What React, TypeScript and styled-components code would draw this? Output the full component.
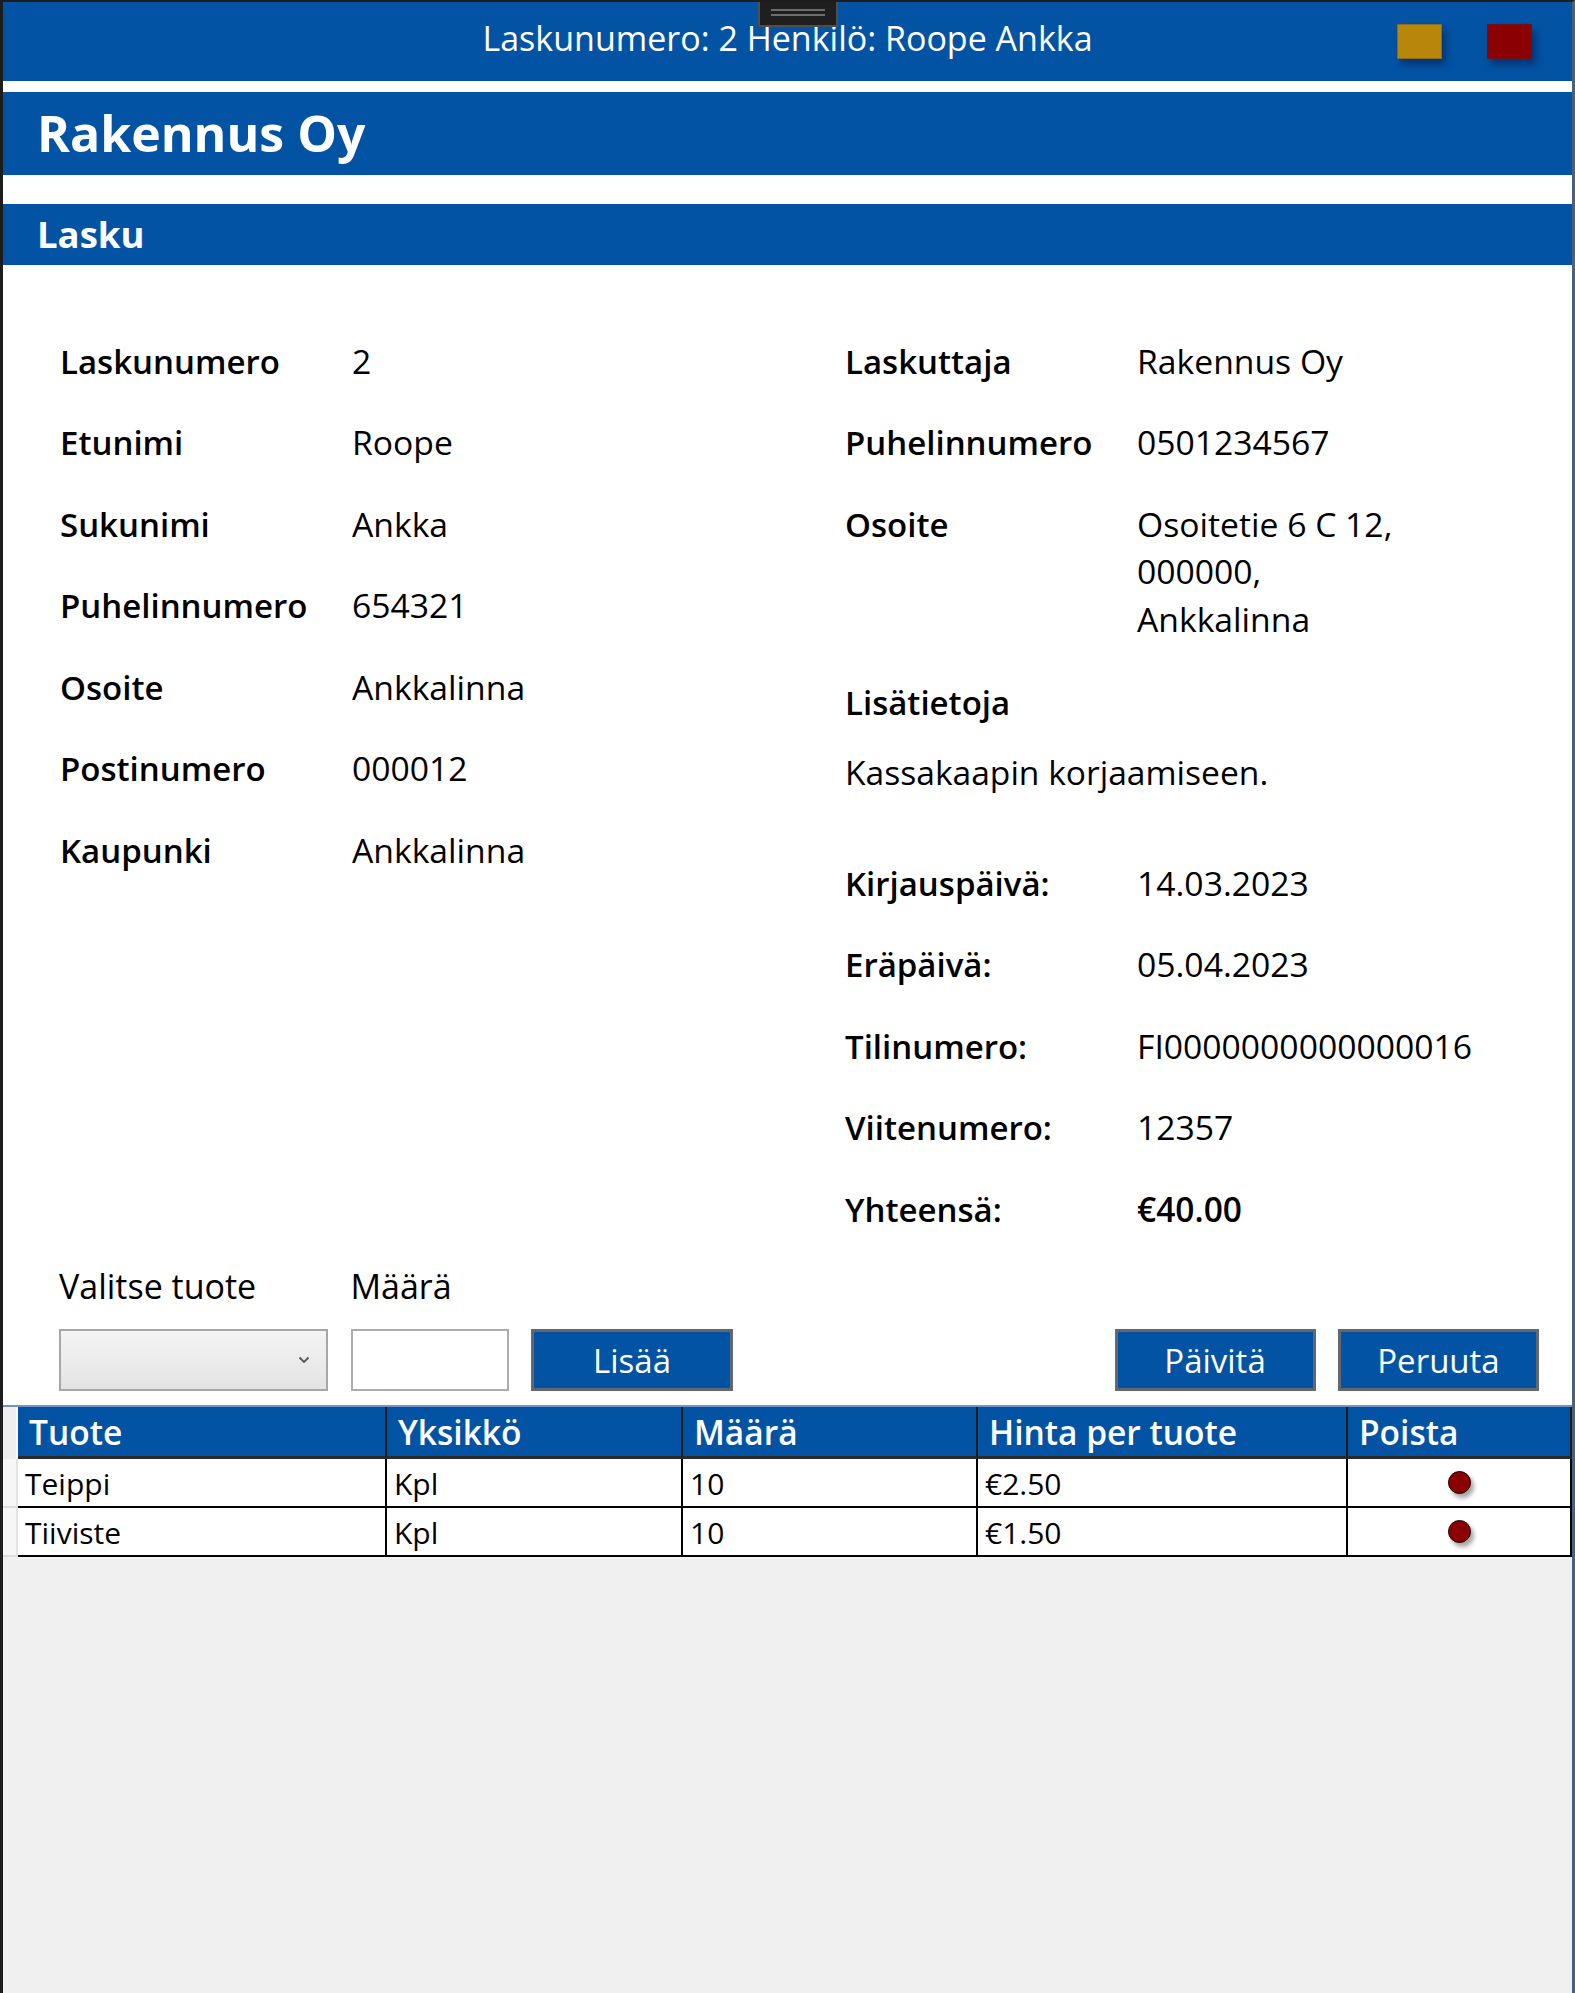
import React from "react";
import styled, { createGlobalStyle } from "styled-components";

const BLUE = "#0353a4";
const FONT = `"Open Sans", "Noto Sans", "Liberation Sans", sans-serif`;

const GlobalStyle = createGlobalStyle`
  html, body { margin: 0; padding: 0; background: #ffffff; }
  body { font-family: ${FONT}; color: #000000; }
  *, *::before, *::after { box-sizing: border-box; }
`;

const Window = styled.div`
  width: 1575px;
  height: 1993px;
  display: flex;
  flex-direction: column;
  border-top: 2px solid #1d1d1d;
  border-left: 3px solid #1d1d1d;
  border-right: 3px solid #46627f;
  background: #ffffff;
  overflow: hidden;
`;

const TitleBar = styled.header`
  position: relative;
  flex: none;
  height: 79px;
  background: ${BLUE};
  display: grid;
  grid-template-columns: 1fr auto 1fr;
  align-items: center;
`;

const TitleText = styled.div`
  grid-column: 2;
  align-self: start;
  padding-top: 16px;
  font-size: 34px;
  line-height: 1.2;
  color: #ffffff;
  white-space: nowrap;
`;

const WindowButtons = styled.div`
  grid-column: 3;
  justify-self: end;
  display: flex;
  gap: 45px;
  padding-right: 40px;
`;

const WindowButton = styled.button<{ $color: string; $edge: string }>`
  width: 45px;
  height: 35px;
  padding: 0;
  border: 1px solid ${(p) => p.$edge};
  background: ${(p) => p.$color};
  box-shadow: 4px 6px 7px rgba(0, 20, 60, 0.45);
`;

const Handle = styled.div`
  position: absolute;
  top: -2px;
  left: 755px;
  width: 80px;
  height: 27px;
  background: #1f1f1f;
  border: 2px solid #4f4f4f;
  border-top: none;
  display: flex;
  flex-direction: column;
  align-items: center;
  gap: 3px;
  padding-top: 9px;
`;

const HandleLine = styled.span`
  width: 54px;
  height: 2px;
  background: #6c6c6c;
`;

const CompanyBand = styled.div`
  flex: none;
  margin-top: 11px;
  height: 83px;
  background: ${BLUE};
  color: #ffffff;
  font-size: 50px;
  font-weight: 700;
  line-height: 83px;
  padding-left: 34px;
  white-space: nowrap;
`;

const SectionBand = styled.div`
  flex: none;
  margin-top: 29px;
  height: 61px;
  background: ${BLUE};
  color: #ffffff;
  font-size: 36.5px;
  font-weight: 700;
  line-height: 61px;
  padding-left: 34px;
`;

const Content = styled.main`
  flex: none;
  padding: 72.5px 33px 14px 57px;
`;

const InfoColumns = styled.div`
  display: grid;
  grid-template-columns: 785px 1fr;
  align-items: start;
`;

const InfoColumn = styled.div`
  display: flex;
  flex-direction: column;
`;

const InfoGrid = styled.div<{ $top?: number }>`
  display: grid;
  grid-template-columns: 292px 1fr;
  row-gap: 34px;
  margin-top: ${(p) => p.$top ?? 0}px;
  line-height: 47.5px;
`;

const Label = styled.div`
  font-size: 33px;
  font-weight: 600;
  white-space: nowrap;
`;

const Value = styled.div<{ $strong?: boolean }>`
  font-size: ${(p) => (p.$strong ? 33.5 : 33.7)}px;
  font-weight: ${(p) => (p.$strong ? 600 : 400)};
  white-space: nowrap;
`;

const NoteLabel = styled.div`
  margin-top: 35.5px;
  font-size: 33px;
  line-height: 47.5px;
  font-weight: 600;
`;

const NoteText = styled.div`
  margin-top: 22.5px;
  font-size: 33.6px;
  line-height: 47.5px;
`;

const Controls = styled.div`
  display: grid;
  grid-template-columns: 269px 158px 202px 1fr 201px 201px;
  column-gap: 22.5px;
  row-gap: 18.5px;
  margin-top: 29.5px;
  margin-left: -1px;
`;

const ControlLabel = styled.div<{ $col: number }>`
  grid-column: ${(p) => p.$col};
  grid-row: 1;
  font-size: 34px;
  line-height: 47.5px;
  white-space: nowrap;
`;

const ComboBox = styled.div`
  grid-row: 2;
  grid-column: 1;
  height: 62px;
  border: 2px solid #a7a7a7;
  background: linear-gradient(#f4f4f4, #e3e3e3);
  display: flex;
  align-items: center;
  justify-content: flex-end;
  padding-right: 16px;
`;

const TextBox = styled.div`
  grid-row: 2;
  grid-column: 2;
  height: 62px;
  border: 2px solid #acacac;
  background: #ffffff;
`;

const ActionButton = styled.button<{ $col: number }>`
  grid-row: 2;
  grid-column: ${(p) => p.$col};
  height: 62px;
  margin: 0;
  padding: 3px 0 0;
  border: 3px solid #626871;
  background: ${BLUE};
  color: #ffffff;
  font-family: ${FONT};
  font-size: 33px;
  line-height: 1.2;
`;

const Panel = styled.section`
  flex: 1;
  background: #f0f0f0;
  border-top: 2px solid #7394be;
  display: flex;
  align-items: flex-start;
`;

const RowHeaders = styled.div`
  width: 15px;
  flex: none;
  display: flex;
  flex-direction: column;
`;

const RowHeaderCell = styled.div<{ $head?: boolean }>`
  height: ${(p) => (p.$head ? 52 : 49)}px;
  background: ${(p) => (p.$head ? "#efefef" : "#f6f6f6")};
  border-right: 2px solid ${(p) => (p.$head ? "#f9f9f9" : "#e2e2e2")};
  border-bottom: ${(p) => (p.$head ? "none" : "2px solid #dcdcdc")};
`;

const Table = styled.div`
  width: 1554px;
  display: grid;
  grid-template-columns: 369px 296px 295px 370px 224px;
`;

const HeadCell = styled.div`
  height: 52px;
  background: ${BLUE};
  color: #ffffff;
  font-size: 33.5px;
  font-weight: 600;
  line-height: 49px;
  padding: 1px 0 0 11px;
  border-right: 2px solid #1b1b1b;
  border-bottom: 3px solid #2a2a2a;
  white-space: nowrap;
`;

const Cell = styled.div<{ $center?: boolean }>`
  height: 49px;
  background: #ffffff;
  font-size: 30px;
  line-height: 47px;
  padding: ${(p) => (p.$center ? "0" : "1px 0 0 7px")};
  border-right: 2px solid #000000;
  border-bottom: 2px solid #000000;
  display: ${(p) => (p.$center ? "flex" : "block")};
  align-items: center;
  justify-content: center;
  white-space: nowrap;
`;

const DeleteDot = styled.span`
  width: 23px;
  height: 23px;
  border-radius: 50%;
  background: #8b0000;
  border: 1.5px solid #1a0000;
  box-shadow: 3px 4px 4px rgba(0, 0, 0, 0.35);
`;

const leftInfo: [string, string][] = [
  ["Laskunumero", "2"],
  ["Etunimi", "Roope"],
  ["Sukunimi", "Ankka"],
  ["Puhelinnumero", "654321"],
  ["Osoite", "Ankkalinna"],
  ["Postinumero", "000012"],
  ["Kaupunki", "Ankkalinna"],
];

const dates: [string, string, boolean][] = [
  ["Kirjauspäivä:", "14.03.2023", false],
  ["Eräpäivä:", "05.04.2023", false],
  ["Tilinumero:", "FI0000000000000016", false],
  ["Viitenumero:", "12357", false],
  ["Yhteensä:", "€40.00", true],
];

const rows = [
  { tuote: "Teippi", yksikko: "Kpl", maara: "10", hinta: "€2.50" },
  { tuote: "Tiiviste", yksikko: "Kpl", maara: "10", hinta: "€1.50" },
];

const Chevron = () => (
  <svg width="12" height="8" viewBox="0 0 12 8">
    <polyline points="1.5,1.5 6,6 10.5,1.5" fill="none" stroke="#555" strokeWidth="1.8" />
  </svg>
);

export default function App() {
  return (
    <>
      <GlobalStyle />
      <Window>
        <TitleBar>
          <TitleText>Laskunumero: 2 Henkilö: Roope Ankka</TitleText>
          <WindowButtons>
            <WindowButton $color="#b8860b" $edge="#8c6a1c" aria-label="Pienennä" />
            <WindowButton $color="#8b0000" $edge="#6e0f1c" aria-label="Sulje" />
          </WindowButtons>
          <Handle>
            <HandleLine />
            <HandleLine />
          </Handle>
        </TitleBar>
        <CompanyBand>Rakennus Oy</CompanyBand>
        <SectionBand>Lasku</SectionBand>
        <Content>
          <InfoColumns>
            <InfoColumn>
              <InfoGrid>
                {leftInfo.map(([l, v]) => (
                  <React.Fragment key={l}>
                    <Label>{l}</Label>
                    <Value>{v}</Value>
                  </React.Fragment>
                ))}
              </InfoGrid>
            </InfoColumn>
            <InfoColumn>
              <InfoGrid>
                <Label>Laskuttaja</Label>
                <Value>Rakennus Oy</Value>
                <Label>Puhelinnumero</Label>
                <Value>0501234567</Value>
                <Label>Osoite</Label>
                <Value>
                  Osoitetie 6 C 12,
                  <br />
                  000000,
                  <br />
                  Ankkalinna
                </Value>
              </InfoGrid>
              <NoteLabel>Lisätietoja</NoteLabel>
              <NoteText>Kassakaapin korjaamiseen.</NoteText>
              <InfoGrid $top={63.5}>
                {dates.map(([l, v, s]) => (
                  <React.Fragment key={l}>
                    <Label>{l}</Label>
                    <Value $strong={s}>{v}</Value>
                  </React.Fragment>
                ))}
              </InfoGrid>
            </InfoColumn>
          </InfoColumns>
          <Controls>
            <ControlLabel $col={1}>Valitse tuote</ControlLabel>
            <ControlLabel $col={2}>Määrä</ControlLabel>
            <ComboBox>
              <Chevron />
            </ComboBox>
            <TextBox />
            <ActionButton $col={3}>Lisää</ActionButton>
            <ActionButton $col={5}>Päivitä</ActionButton>
            <ActionButton $col={6}>Peruuta</ActionButton>
          </Controls>
        </Content>
        <Panel>
          <RowHeaders>
            <RowHeaderCell $head />
            {rows.map((r) => (
              <RowHeaderCell key={r.tuote} />
            ))}
          </RowHeaders>
          <Table>
            <HeadCell>Tuote</HeadCell>
            <HeadCell>Yksikkö</HeadCell>
            <HeadCell>Määrä</HeadCell>
            <HeadCell>Hinta per tuote</HeadCell>
            <HeadCell>Poista</HeadCell>
            {rows.map((r) => (
              <React.Fragment key={r.tuote}>
                <Cell>{r.tuote}</Cell>
                <Cell>{r.yksikko}</Cell>
                <Cell>{r.maara}</Cell>
                <Cell>{r.hinta}</Cell>
                <Cell $center>
                  <DeleteDot />
                </Cell>
              </React.Fragment>
            ))}
          </Table>
        </Panel>
      </Window>
    </>
  );
}
